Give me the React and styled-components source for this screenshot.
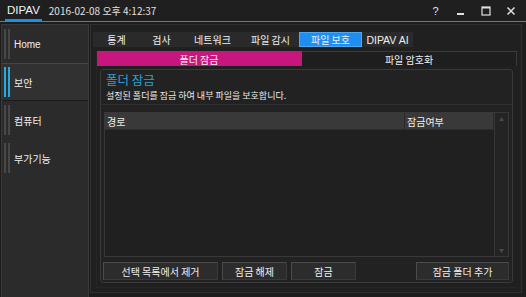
import React, { useState } from "react";
import styled, { createGlobalStyle } from "styled-components";

const GlobalStyle = createGlobalStyle`
  html, body {
    margin: 0;
    background: #1d1d1d;
  }
  * {
    box-sizing: border-box;
  }
  body {
    font-family: "Noto Sans CJK KR", "Noto Sans", sans-serif;
    color: #e6e6e6;
  }
`;

const navItems = ["Home", "보안", "컴퓨터", "부가기능"];
const tabs = [
  { label: "통계", w: 47 },
  { label: "검사", w: 43 },
  { label: "네트워크", w: 59 },
  { label: "파일 감시", w: 57 },
  { label: "파일 보호", w: 63 },
  { label: "DIPAV AI", w: 51 },
];
const buttons = ["선택 목록에서 제거", "잠금 해제", "잠금"];

export default function App() {
  const [nav, setNav] = useState(1);
  const [tab, setTab] = useState(4);
  const [sub, setSub] = useState(0);

  return (
    <Window>
      <GlobalStyle />
      <TitleBar>
        <Brand>DIPAV</Brand>
        <Clock>2016-02-08 오후 4:12:37</Clock>
        <Spacer />
        <Controls>
          <CtrlButton>
            <HelpMark>?</HelpMark>
          </CtrlButton>
          <CtrlButton>
            <svg width="10" height="10" viewBox="0 0 10 10">
              <rect x="1" y="7" width="7" height="2" fill="#e0e0e0" />
            </svg>
          </CtrlButton>
          <CtrlButton>
            <svg width="10" height="10" viewBox="0 0 10 10">
              <rect x="1" y="1" width="8" height="8" fill="none" stroke="#e0e0e0" strokeWidth="1.2" />
              <rect x="1" y="1" width="8" height="1.5" fill="#e0e0e0" />
            </svg>
          </CtrlButton>
          <CtrlButton>
            <svg width="10" height="10" viewBox="0 0 10 10">
              <path d="M1.5 1.5 L8.5 8.5 M8.5 1.5 L1.5 8.5" stroke="#e0e0e0" strokeWidth="1.5" />
            </svg>
          </CtrlButton>
        </Controls>
      </TitleBar>

      <Body>
        <Sidebar>
          {navItems.map((item, i) => (
            <NavItem key={item} $active={nav === i} onClick={() => setNav(i)}>
              <NavBars $active={nav === i} />
              {item}
            </NavItem>
          ))}
        </Sidebar>

        <Main>
          <Frame>
            <TabBar>
              {tabs.map((t, i) => (
                <Tab key={t.label} $w={t.w} $active={tab === i} onClick={() => setTab(i)}>
                  {t.label}
                </Tab>
              ))}
            </TabBar>

            <SubArea>
              <SubTabs>
                <SubTab $active={sub === 0} $fixed onClick={() => setSub(0)}>
                  폴더 잠금
                </SubTab>
                <SubTab $active={sub === 1} onClick={() => setSub(1)}>
                  파일 암호화
                </SubTab>
              </SubTabs>

              <Panel>
                <PanelHead>
                  <PanelTitle>폴더 잠금</PanelTitle>
                  <PanelDesc>설정된 폴더를 잠금 하여 내부 파일을 보호합니다.</PanelDesc>
                </PanelHead>

                <Table>
                  <TableMain>
                    <HeaderRow>
                      <HeaderCell $w={300}>경로</HeaderCell>
                      <HeaderCell>잠금여부</HeaderCell>
                    </HeaderRow>
                  </TableMain>
                  <ScrollBar>
                    <Arrow>▲</Arrow>
                    <Arrow>▼</Arrow>
                  </ScrollBar>
                </Table>

                <ButtonRow>
                  {buttons.map((b, i) => (
                    <ActionButton key={b} $w={i === 0 ? 115 : 65}>
                      {b}
                    </ActionButton>
                  ))}
                  <Spacer />
                  <ActionButton $w={93}>잠금 폴더 추가</ActionButton>
                </ButtonRow>
              </Panel>
            </SubArea>
          </Frame>
        </Main>
      </Body>
    </Window>
  );
}

const Window = styled.div`
  width: 526px;
  height: 297px;
  display: flex;
  flex-direction: column;
  background: #1d1d1d;
  overflow: hidden;
`;

const TitleBar = styled.div`
  height: 22px;
  display: flex;
  align-items: stretch;
  background: #1f1f1f;
  border-bottom: 1px solid #1d8fe6;
  padding-left: 5px;
`;

const Brand = styled.div`
  display: flex;
  align-items: center;
  padding: 0 2px;
  font-family: "Liberation Sans", Arial, sans-serif;
  font-size: 11.5px;
  color: #f2f2f2;
  border-bottom: 2px solid #1d8fe6;
`;

const Clock = styled.div`
  display: flex;
  align-items: center;
  margin-left: 7px;
  font-size: 10px;
  color: #e0e0e0;
  padding-bottom: 1px;
`;

const Spacer = styled.div`
  flex: 1;
`;

const Controls = styled.div`
  display: flex;
  align-items: center;
  padding-right: 3px;
`;

const CtrlButton = styled.div`
  width: 25px;
  height: 100%;
  display: flex;
  align-items: center;
  justify-content: center;
`;

const HelpMark = styled.span`
  font-family: "Liberation Sans", Arial, sans-serif;
  font-size: 11px;
  color: #e0e0e0;
`;

const Body = styled.div`
  flex: 1;
  display: flex;
  padding-top: 2px;
  min-height: 0;
`;

const Sidebar = styled.div`
  width: 88px;
  margin-left: 1px;
  background: #2b2b2b;
  border: 1px solid #393939;
  border-bottom: none;
  display: flex;
  flex-direction: column;
`;

const NavItem = styled.div`
  height: 38px;
  display: flex;
  align-items: center;
  gap: 4px;
  padding-left: 2px;
  font-family: "Liberation Sans", "Noto Sans CJK KR", sans-serif;
  font-size: 10px;
  color: #f0f0f0;
  background: ${(p) => (p.$active ? "#313131" : "transparent")};
  border-top: 1px solid ${(p) => (p.$active ? "#454545" : "transparent")};
  border-bottom: 1px solid ${(p) => (p.$active ? "#1a1a1a" : "transparent")};
  cursor: pointer;
`;

const NavBars = styled.span`
  width: 6px;
  height: 30px;
  border-left: 2px solid ${(p) => (p.$active ? "#27a8e0" : "#474747")};
  border-right: 2px solid ${(p) => (p.$active ? "#27a8e0" : "#474747")};
`;

const Main = styled.div`
  flex: 1;
  padding: 0 4px 4px 1px;
  display: flex;
`;

const Frame = styled.div`
  flex: 1;
  display: flex;
  flex-direction: column;
  background: #202020;
  border: 1px solid #2f2f2f;
  padding: 7px 0 4px 0;
`;

const TabBar = styled.div`
  align-self: flex-start;
  display: flex;
  margin-left: 2px;
  height: 15px;
  background: #2a2a2a;
`;

const Tab = styled.div`
  width: ${(p) => p.$w}px;
  display: flex;
  align-items: center;
  justify-content: center;
  font-size: 10px;
  color: #f0f0f0;
  background: ${(p) => (p.$active ? "#1e8ff0" : "transparent")};
  border: 1px solid ${(p) => (p.$active ? "#4aa8f5" : "transparent")};
  cursor: pointer;
  white-space: nowrap;
  &:last-child {
    font-family: "Liberation Sans", sans-serif;
    font-size: 10.5px;
  }
`;

const SubArea = styled.div`
  flex: 1;
  display: flex;
  flex-direction: column;
  margin: 4px 4px 0 5px;
  border-left: 1px solid #262626;
  border-bottom: 1px solid #262626;
  padding-bottom: 4px;
`;

const SubTabs = styled.div`
  display: flex;
  height: 15px;
`;

const SubTab = styled.div`
  flex: ${(p) => (p.$fixed ? "0 0 205px" : "1")};
  display: flex;
  align-items: center;
  justify-content: center;
  font-size: 10px;
  color: #f0f0f0;
  background: ${(p) => (p.$active ? "#c8167f" : "#1e1e1e")};
  border-top: 1px solid ${(p) => (p.$active ? "#c8167f" : "#3a3a3a")};
  border-right: 1px solid ${(p) => (p.$active ? "#c8167f" : "#3a3a3a")};
  cursor: pointer;
`;

const Panel = styled.div`
  flex: 1;
  display: flex;
  flex-direction: column;
  margin: 3px 4px 0 3px;
  background: #222222;
  border: 1px solid #3a3a3a;
  border-radius: 3px;
  padding-bottom: 2px;
`;

const PanelHead = styled.div`
  height: 35px;
  padding: 1px 5px 0;
  border-bottom: 1px solid #303030;
`;

const PanelTitle = styled.div`
  font-size: 12.5px;
  line-height: 18px;
  color: #2aa3d6;
`;

const PanelDesc = styled.div`
  font-size: 9px;
  line-height: 13px;
  color: #ececec;
`;

const Table = styled.div`
  flex: 1;
  display: flex;
  margin: 7px 3px 0;
  border: 1px solid #383838;
  background: #202020;
`;

const TableMain = styled.div`
  flex: 1;
`;

const HeaderRow = styled.div`
  display: flex;
  height: 17px;
  background: #393939;
  border-bottom: 1px solid #2c2c2c;
`;

const HeaderCell = styled.div`
  ${(p) => (p.$w ? `width: ${p.$w}px;` : "flex: 1;")}
  display: flex;
  align-items: center;
  padding-left: 2px;
  font-size: 10px;
  color: #eeeeee;
  border-right: 1px solid #2a2a2a;
`;

const ScrollBar = styled.div`
  width: 14px;
  display: flex;
  flex-direction: column;
  justify-content: space-between;
  align-items: center;
  background: #242424;
  border-left: 1px solid #363636;
  padding: 3px 0;
`;

const Arrow = styled.span`
  font-size: 5px;
  line-height: 6px;
  color: #4a4a4a;
`;

const ButtonRow = styled.div`
  display: flex;
  gap: 4px;
  margin: 5px 3px 0 2px;
`;

const ActionButton = styled.div`
  width: ${(p) => p.$w}px;
  height: 18px;
  display: flex;
  align-items: center;
  justify-content: center;
  font-size: 10px;
  color: #f0f0f0;
  background: #2c2c2c;
  border: 1px solid #4c4c4c;
  border-right-color: #3a3a3a;
  border-bottom-color: #3a3a3a;
  cursor: pointer;
  white-space: nowrap;
`;
